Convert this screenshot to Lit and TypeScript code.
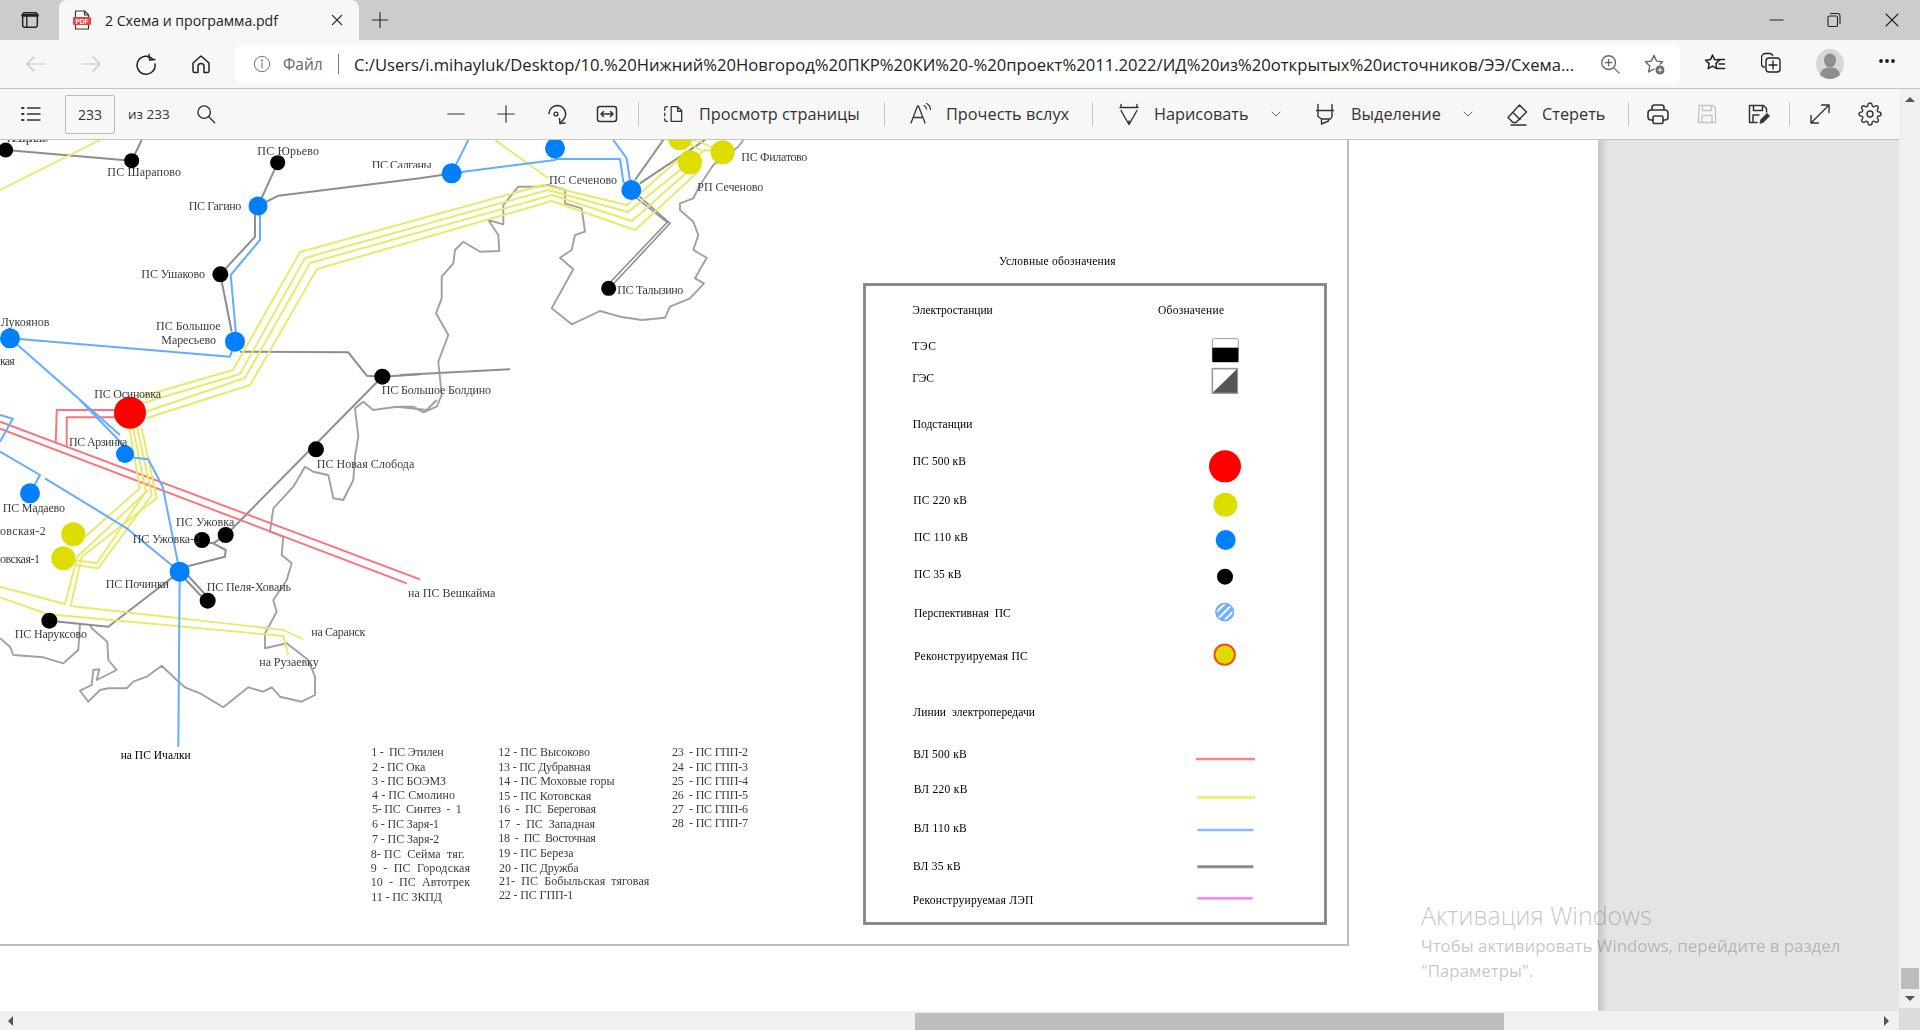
import { LitElement, html, css, svg } from "lit";
import { customElement } from "lit/decorators.js";

type Frame = [number, number];
const Z4: Frame = [0, 135], Z5: Frame = [400, 135], Z6: Frame = [0, 400], Z7: Frame = [350, 730], Z8: Frame = [850, 240], Z9: Frame = [850, 540], Z10: Frame = [0, 600], A: Frame = [0, 0];

const pts = (f: Frame, s: string) =>
  s.trim().split(/\s+/).map((p) => {
    const [x, y] = p.split(",").map(Number);
    return f === A ? `${x},${y}` : `${(f[0] + x / 3).toFixed(1)},${(f[1] + y / 3).toFixed(1)}`;
  }).join(" ");

const C = { y: "#e9e966", r: "#ff7078", b: "#62adff", g: "#8e8e8e", bd: "#a0a0a0" };

// [frame, colour, width, points] in crop coordinates of the reference
const LINES: [Frame, string, number, string][] = [
  // region border
  [Z5, C.bd, 1.9, "1030,15 1015,35 940,90 900,150 880,190 840,205 840,225 880,260 895,300 880,345 920,368 885,430 912,445 870,490 810,515 795,548 725,555 660,545 600,528 515,568 455,520 520,403 480,368 515,345 525,300 555,290 545,220 495,205 495,165 445,150 410,155 355,155 310,210 310,268 265,255 295,300 298,348 240,350 190,320 165,345 160,385 125,425 125,490 108,535 145,600 115,680 125,780 110,815 70,832 40,815 0,815"],
  [Z6, C.bd, 1.9, "1310,0 1280,30 1190,20 1120,30 1090,5 1065,25 1075,110 1065,170 1060,240 1030,300 1000,295 985,225 940,215 915,200 880,260 820,325 810,395 850,410 845,465 875,490 860,540 820,600 830,635 795,700 795,745 860,730 925,780"],
  [Z10, C.bd, 1.9, "925,180 945,230 945,285 905,305 840,290 815,262 790,275 745,262 670,322 600,280 555,262 530,240 485,197 440,230 400,245 380,265 325,265 300,270 265,305 240,272 275,255 280,210 298,208 290,240 350,210 325,180 322,125 275,85 270,75"],
  [Z10, C.bd, 1.9, "240,70 235,150 190,190 130,172 40,165 30,140 0,115"],
  // 35 kV
  [Z4, C.g, 2, "17,45 395,77 425,15"],
  [Z4, C.g, 2, "833,83 774,213 835,182 1260,130 1360,115"],
  [Z4, C.g, 2, "765,213 765,305 661,418 695,590"],
  [Z4, C.g, 2, "720,650 1045,652 1100,722 1147,725 1260,718"],
  [Z5, C.g, 2, "0,720 330,703"],
  [Z5, C.g, 2, "705,135 790,15"],
  [Z5, C.g, 2, "720,145 915,15"],
  [Z5, C.g, 1.6, "708,188 802,262 632,440"],
  [Z5, C.g, 1.6, "718,184 810,265 642,445"],
  [A, C.g, 2, "382,377 226,535"],
  [Z6, C.g, 2, "606,425 640,430 677,405"],
  [Z6, C.g, 2, "640,430 677,450 675,470 539,505"],
  [Z6, C.g, 2, "553,535 610,595"],
  [Z6, C.g, 2, "565,528 622,590"],
  [Z6, C.g, 2, "539,515 325,680 148,662"],
  // 500 kV
  [Z6, C.r, 1.9, "0,65 1260,538"],
  [Z6, C.r, 1.9, "0,86 1220,550"],
  [Z6, C.r, 1.9, "345,30 170,30 167,128"],
  [Z6, C.r, 1.9, "345,52 200,52 200,142"],
  // 220 kV
  [Z4, C.y, 1.9, "0,165 300,15"],
  [A, C.y, 1.9, "140,397 233,370 300,252 543,185 627,205 680,158"],
  [A, C.y, 1.9, "143,403 240,374 305,258 548,190 628,212 690,162"],
  [A, C.y, 1.9, "145,412 245,378 310,263 552,195 632,221 695,165"],
  [A, C.y, 1.9, "147,418 250,385 317,269 552,201 635,230 700,170"],
  [Z5, C.y, 1.9, "285,15 445,130"],
  [A, C.y, 1.7, "680,138 700,142 723,152"],
  [A, C.y, 1.7, "690,162 705,150 723,152"],
  [A, C.y, 1.7, "680,138 700,150 723,152"],
  [Z6, C.y, 1.9, "388,85 420,265 255,410"],
  [Z6, C.y, 1.9, "400,85 437,275 290,490 225,480"],
  [Z6, C.y, 1.9, "412,85 455,285 295,505 225,495"],
  [Z6, C.y, 1.9, "425,85 470,295 245,470 212,618 850,690 910,718"],
  [Z6, C.y, 1.9, "445,270 232,470 195,612 0,560"],
  [Z6, C.y, 1.9, "0,592 140,642 850,708 865,765"],
  // 110 kV
  [Z4, C.b, 2, "780,213 780,315 692,420 710,620"],
  [Z4, C.b, 2, "30,610 690,665 705,620"],
  [Z4, C.b, 2, "30,610 360,900"],
  [Z6, C.b, 2, "240,0 375,140"],
  [Z6, C.b, 2, "375,170 445,178 488,260 539,515 535,1040"],
  [Z6, C.b, 2, "0,155 120,225 90,280"],
  [Z6, C.b, 2, "135,235 380,385 539,515"],
  [Z6, C.b, 2, "0,45 38,56 0,125"],
  [Z5, C.b, 2, "155,115 205,15"],
  [Z5, C.b, 2, "155,115 465,75 465,40"],
  [Z5, C.b, 2, "465,72 660,72 670,140 690,165"],
  [Z5, C.b, 2, "640,15 680,70 694,165"],
];

const NODES: [Frame, number, number, number, string][] = [
  [Z4, 17, 45, 7.5, "#000"], [Z4, 395, 77, 7.5, "#000"], [Z4, 833, 83, 7.5, "#000"],
  [Z4, 774, 213, 9.5, "#0080ff"], [Z4, 661, 418, 8, "#000"], [Z4, 705, 620, 10, "#0080ff"],
  [Z4, 30, 610, 10, "#0080ff"], [Z4, 390, 833, 16, "#ff0000"], [Z4, 1147, 725, 8, "#000"],
  [Z5, 155, 115, 10, "#0080ff"], [Z5, 465, 40, 10, "#0080ff"], [Z5, 694, 165, 10, "#0080ff"],
  [Z5, 840, 10, 12, "#dddd00"], [Z5, 870, 82, 12, "#dddd00"], [Z5, 968, 52, 12, "#dddd00"],
  [Z5, 626, 460, 7.5, "#000"], [Z6, 375, 162, 9, "#0080ff"], [Z6, 90, 280, 10, "#0080ff"],
  [Z6, 220, 403, 12, "#dddd00"], [Z6, 190, 475, 12, "#dddd00"], [Z6, 677, 405, 8, "#000"],
  [Z6, 606, 420, 8, "#000"], [Z6, 539, 515, 10, "#0080ff"], [Z6, 623, 602, 8, "#000"],
  [Z6, 148, 662, 8, "#000"], [Z6, 948, 148, 8, "#000"],
];

// [frame, text, x, baseline, end x]
const LABELS: [Frame, string, number, number, number][] = [
  [Z4, "ПС Борисово", 20, 20, 145], [Z4, "ПС Шарапово", 322, 122, 543], [Z4, "ПС Юрьево", 772, 60, 957],
  [Z4, "ПС Гагино", 566, 225, 724], [Z4, "ПС Ушаково", 424, 430, 615], [Z4, "ПС Большое", 468, 585, 662],
  [Z4, "Маресьево", 484, 628, 648], [Z4, "ПС Осиновка", 283, 790, 483], [Z4, "Лукоянов", 2, 573, 148],
  [Z4, "кая", 0, 690, 44], [Z4, "ПС Салганы", 1115, 102, 1295], [Z4, "ПС Большое Болдино", 1145, 777, 1473],
  [Z5, "ПС Сеченово", 447, 147, 651], [Z5, "ПС Филатово", 1024, 78, 1222], [Z5, "РП Сеченово", 892, 168, 1090],
  [Z5, "ПС Талызино", 652, 477, 850],
  [Z6, "ПС Арзинка", 207, 137, 382], [Z6, "ПС Новая Слобода", 950, 204, 1243], [Z6, "ПС Мадаево", 8, 336, 195],
  [Z6, "овская-2", 0, 405, 137], [Z6, "овская-1", 0, 490, 120], [Z6, "ПС Ужовка", 528, 378, 703],
  [Z6, "ПС Ужовка-2", 398, 428, 600], [Z6, "ПС Починки", 317, 563, 507], [Z6, "ПС Пеля-Ховань", 620, 573, 873],
  [Z6, "на ПС Вешкайма", 1224, 590, 1486], [Z6, "на Саранск", 934, 708, 1096], [Z6, "на Рузаевку", 778, 798, 956],
  [Z6, "ПС Наруксово", 44, 714, 261],
  [Z7, "1 -  ПС Этилен", 64, 78, 281], [Z7, "2 - ПС Ока", 66, 122, 226], [Z7, "3 - ПС БОЭМЗ", 66, 164, 288],
  [Z7, "4 - ПС Смолино", 66, 207, 315], [Z7, "5- ПС  Синтез  -  1", 66, 249, 335], [Z7, "6 - ПС Заря-1", 66, 294, 267],
  [Z7, "7 - ПС Заря-2", 66, 338, 268], [Z7, "8- ПС  Сейма  тяг.", 62, 384, 344], [Z7, "9  -  ПС  Городская", 62, 426, 360],
  [Z7, "10  -  ПС  Автотрек", 62, 468, 360], [Z7, "11 - ПС ЗКПД", 64, 512, 276],
  [Z7, "12 - ПС Высоково", 445, 78, 720], [Z7, "13 - ПС Дубравная", 445, 123, 722], [Z7, "14 - ПС Моховые горы", 445, 165, 794],
  [Z7, "15 - ПС Котовская", 445, 210, 724], [Z7, "16  -  ПС  Береговая", 445, 249, 738], [Z7, "17  -  ПС  Западная", 445, 294, 735],
  [Z7, "18  -  ПС  Восточная", 445, 336, 737], [Z7, "19 - ПС Береза", 445, 381, 671], [Z7, "20 - ПС Дружба", 447, 426, 686],
  [Z7, "21-  ПС  Бобыльская  тяговая", 447, 466, 898], [Z7, "22 - ПС ГПП-1", 447, 506, 670],
  [Z7, "23  - ПС ГПП-2", 966, 78, 1194], [Z7, "24  - ПС ГПП-3", 966, 122, 1194], [Z7, "25  - ПС ГПП-4", 966, 164, 1194],
  [Z7, "26  - ПС ГПП-5", 966, 207, 1194], [Z7, "27  - ПС ГПП-6", 966, 249, 1194], [Z7, "28  - ПС ГПП-7", 966, 291, 1194],
];

const LEGEND: [Frame, string, number, number, number][] = [
  [Z6, "на ПС Ичалки", 362, 1078, 572],
  [Z8, "Условные обозначения", 447, 75, 797], [Z8, "Электростанции", 187, 222, 428], [Z8, "Обозначение", 924, 222, 1122],
  [Z8, "ТЭС", 187, 330, 258], [Z8, "ГЭС", 187, 426, 252], [Z8, "Подстанции", 188, 564, 367], [Z8, "ПС 500 кВ", 188, 675, 348],
  [Z8, "ПС 220 кВ", 190, 791, 351], [Z8, "ПС 110 кВ", 192, 903, 354], [Z9, "ПС 35 кВ", 192, 113, 334],
  [Z9, "Перспективная  ПС", 192, 230, 482], [Z9, "Реконструируемая ПС", 192, 360, 533], [Z9, "Линии  электропередачи", 190, 528, 555],
  [Z9, "ВЛ 500 кВ", 190, 654, 350], [Z9, "ВЛ 220 кВ", 191, 758, 352], [Z9, "ВЛ 110 кВ", 191, 875, 350],
  [Z9, "ВЛ 35 кВ", 189, 989, 332], [Z9, "Реконструируемая ЛЭП", 188, 1091, 550],
];

const LEGEND_LINES: [number, number, number, string, number][] = [
  [1038, 1215, 657, "#ff8088", 2.6], [1042, 1215, 772, "#eeee70", 2.6], [1042, 1210, 870, "#88bbff", 2.6],
  [1042, 1210, 980, "#8c8c8c", 3], [1042, 1208, 1075, "#ff70ff", 2.4],
];

const label = (cls: string) => (l: [Frame, string, number, number, number]) => {
  const [f, t, x, y, e] = l;
  return svg`<text class=${cls} x=${f[0] + x / 3} y=${f[1] + y / 3} textLength=${(e - x) / 3} lengthAdjust="spacing">${t}</text>`;
};

const ic = (body: unknown, size = 24, view = 24) =>
  html`<svg class="i" width=${size} height=${size} viewBox="0 0 ${view} ${view}" fill="none" stroke="currentColor" stroke-width="1.4" stroke-linecap="round" stroke-linejoin="round">${body}</svg>`;

const GEAR = "M19.4 15a1.65 1.65 0 0 0 .33 1.82l.06.06a2 2 0 0 1 0 2.83 2 2 0 0 1-2.83 0l-.06-.06a1.65 1.65 0 0 0-1.82-.33 1.65 1.65 0 0 0-1 1.51V21a2 2 0 0 1-2 2 2 2 0 0 1-2-2v-.09A1.65 1.65 0 0 0 9 19.4a1.65 1.65 0 0 0-1.82.33l-.06.06a2 2 0 0 1-2.83 0 2 2 0 0 1 0-2.83l.06-.06a1.65 1.65 0 0 0 .33-1.82 1.65 1.65 0 0 0-1.51-1H3a2 2 0 0 1-2-2 2 2 0 0 1 2-2h.09A1.65 1.65 0 0 0 4.6 9a1.65 1.65 0 0 0-.33-1.82l-.06-.06a2 2 0 0 1 0-2.83 2 2 0 0 1 2.83 0l.06.06a1.65 1.65 0 0 0 1.82.33H9a1.65 1.65 0 0 0 1-1.51V3a2 2 0 0 1 2-2 2 2 0 0 1 2 2v.09a1.65 1.65 0 0 0 1 1.51 1.65 1.65 0 0 0 1.82-.33l.06-.06a2 2 0 0 1 2.83 0 2 2 0 0 1 0 2.83l-.06.06a1.65 1.65 0 0 0-.33 1.82V9a1.65 1.65 0 0 0 1.51 1H21a2 2 0 0 1 2 2 2 2 0 0 1-2 2h-.09a1.65 1.65 0 0 0-1.51 1z";

const STAR = "M12 3.5l2.6 5.6 6 .7-4.4 4.1 1.2 6L12 17l-5.4 2.9 1.2-6-4.4-4.1 6-.7z";

@customElement("app-root")
export class AppRoot extends LitElement {
  static styles = css`
    :host { display: block; position: relative; width: 1920px; height: 1030px; overflow: hidden; font-family: "Open Sans", "Noto Sans", sans-serif; color: #222; background: #fff; }
    .i { display: block; flex: none; }
    .tabstrip { display: flex; height: 40px; background: #ccc; align-items: stretch; }
    .tabs-btn { width: 59px; display: flex; align-items: center; justify-content: center; }
    .tab { width: 300px; background: #f7f7f7; border-radius: 8px 8px 0 0; display: flex; align-items: center; padding: 0 12px 0 14px; box-sizing: border-box; font-size: 14.1px; white-space: nowrap; }
    .tab .name { margin-left: 14px; flex: 1; }
    .newtab { width: 42px; display: flex; align-items: center; justify-content: center; }
    .win { margin-left: auto; display: flex; }
    .win div { width: 57px; display: flex; align-items: center; justify-content: center; }
    .toolbar { display: flex; align-items: center; height: 48px; background: #f7f7f7; border-bottom: 1px solid #c4c4c4; padding-left: 8px; }
    .nav { width: 55px; display: flex; justify-content: center; }
    .dis { color: #c6c6c6; }
    .pill { width: 1445px; height: 38px; margin-left: 7px; background: #fff; border-radius: 6px; display: flex; align-items: center; padding-left: 17px; box-sizing: border-box; font-size: 16.64px; white-space: nowrap; }
    .info { color: #666; }
    .file { margin-left: 11px; width: 40px; color: #666; font-size: 15.5px; }
    .bar { width: 1px; height: 20px; background: #777; margin-left: 15px; }
    .url { width: 1222px; margin-left: 15px; overflow: hidden; }
    .pill-btn { width: 44px; display: flex; justify-content: center; color: #666; }
    .pill-btn.first { margin-left: 12px; }
    .side { display: flex; margin-left: 7px; }
    .side div { width: 57px; display: flex; justify-content: center; }
    .body { display: flex; height: 941px; }
    .main { width: 1899px; display: flex; flex-direction: column; }
    .pdfbar { height: 50px; background: #f7f7f7; border-bottom: 1px solid #c4c4c4; display: flex; align-items: center; font-size: 16.3px; white-space: nowrap; color: #333; }
    .btn { width: 40px; display: flex; justify-content: center; flex: none; }
    .btn.w50 { width: 50px; }
    .pageno { width: 50px; height: 39px; box-sizing: border-box; border: 1px solid #bbb; border-radius: 2px; background: #f7f7f7; display: flex; align-items: center; justify-content: center; font-size: 14px; }
    .of { width: 43px; font-size: 13.5px; }
    .sep { width: 1px; height: 24px; background: #c6c6c6; flex: none; }
    .ico { width: 20px; display: flex; justify-content: center; flex: none; }
    .txt { flex: none; }
    .chev { width: 16px; display: flex; justify-content: center; flex: none; color: #666; }
    .ml9 { margin-left: 9px; } .ml10 { margin-left: 10px; } .ml11 { margin-left: 11px; } .ml13 { margin-left: 13px; } .ml14 { margin-left: 14px; } .ml15 { margin-left: 15px; } .ml16 { margin-left: 16px; }
    .ml21 { margin-left: 21px; } .ml22 { margin-left: 22px; } .ml23 { margin-left: 23px; } .ml24 { margin-left: 24px; } .ml26 { margin-left: 26px; } .ml31 { margin-left: 31px; } .ml205 { margin-left: 205px; } .ml6 { margin-left: 6px; } .ml1 { margin-left: 1px; }
    .w162 { width: 162px; } .w123 { width: 123px; } .w93 { width: 93px; } .w87 { width: 87px; } .w62 { width: 62px; }
    .viewer { height: 871px; display: flex; background: #e4e4e4; }
    .page { width: 1598px; height: 871px; background: #fff; flex: none; }
    .page svg { display: block; filter: blur(.5px); }
    .page text { font-family: "Liberation Serif", serif; font-size: 12px; fill: #3c3c3c; white-space: pre; }
    .page text.lg { font-size: 11.5px; fill: #000; }
    .gutter { flex: 1; background: linear-gradient(90deg, #c6c6c6 0, #e4e4e4 10px); }
    .hscroll { height: 19px; background: #f0f0f0; display: flex; align-items: center; }
    .hthumb { width: 589px; height: 17px; margin-top: 2px; background: #bdbdbd; margin-left: 902px; }
    .arrow-l, .arrow-r { width: 0; height: 0; border-top: 5px solid transparent; border-bottom: 5px solid transparent; }
    .arrow-l { border-right: 5px solid #555; margin-left: 8px; }
    .arrow-r { border-left: 5px solid #555; margin-left: 380px; }
    .vscroll { width: 21px; background: #f0f0f0; display: flex; flex-direction: column; align-items: center; }
    .arrow-u, .arrow-d { width: 0; height: 0; border-left: 5px solid transparent; border-right: 5px solid transparent; flex: none; }
    .arrow-u { border-bottom: 5px solid #555; margin-top: 8px; }
    .vthumb { width: 18px; height: 21px; background: #bdbdbd; margin-top: 866px; flex: none; }
    .arrow-d { border-top: 5px solid #555; margin-top: 7px; }
    .corner { flex: 1; width: 21px; margin-top: 7px; background: #dcdcdc; }
    .watermark { position: absolute; left: 1421px; top: 897px; color: rgba(90, 90, 90, .36); font-family: "Open Sans", "Noto Sans", sans-serif; pointer-events: none; white-space: nowrap; }
    .wm1 { font-size: 24.9px; font-weight: 300; line-height: 36px; }
    .wm2 { font-size: 16.85px; font-weight: 400; line-height: 25px; }
  `;

  private page() {
    const s8 = (x: number) => 850 + x / 3;
    const y8 = (y: number) => 240 + y / 3;
    const y9 = (y: number) => 540 + y / 3;
    return svg`
      <defs>
        <clipPath id="hc"><circle cx=${s8(1124)} cy=${y9(216)} r="9.3"></circle></clipPath>
      </defs>
      ${LINES.map(([f, c, w, p]) => svg`<polyline points=${pts(f, p)} fill="none" stroke=${c} stroke-width=${w} stroke-linejoin="round"></polyline>`)}
      ${NODES.map(([f, x, y, r, c]) => svg`<circle cx=${f[0] + x / 3} cy=${f[1] + y / 3} r=${r} fill=${c}></circle>`)}
      ${LABELS.map(label(""))}
      ${LEGEND.map(label("lg"))}
      <rect x="370" y="168" width="64" height="5" fill="#fff"></rect>
      <rect x="864.5" y="284.5" width="461" height="639" fill="none" stroke="#858585" stroke-width="2.8"></rect>
      <rect x=${s8(1087)} y=${y8(296)} width="26" height="23" rx="2" fill="#fff" stroke="#999" stroke-width="1"></rect>
      <rect x=${s8(1087)} y=${y8(323)} width="26" height="14.5" fill="#000"></rect>
      <rect x=${s8(1087)} y=${y8(386)} width="25" height="24.5" fill="#fff" stroke="#999" stroke-width="1.6"></rect>
      <polygon points="${s8(1088)},${y8(458)} ${s8(1161)},${y8(387)} ${s8(1161)},${y8(458)}" fill="#555"></polygon>
      <circle cx=${s8(1125)} cy=${y8(679)} r="16" fill="#ff0000"></circle>
      <circle cx=${s8(1126)} cy=${y8(794)} r="12" fill="#dddd00"></circle>
      <circle cx=${s8(1127)} cy=${y9(0)} r="10" fill="#0080ff"></circle>
      <circle cx=${s8(1125)} cy=${y9(110)} r="8" fill="#000"></circle>
      <circle cx=${s8(1124)} cy=${y9(216)} r="9.3" fill="#6ab0ff"></circle>
      <g clip-path="url(#hc)" stroke="#fff" stroke-width="2">
        <line x1=${s8(1124) - 12} y1=${y9(216) + 4} x2=${s8(1124) + 4} y2=${y9(216) - 12}></line>
        <line x1=${s8(1124) - 8} y1=${y9(216) + 8} x2=${s8(1124) + 8} y2=${y9(216) - 8}></line>
        <line x1=${s8(1124) - 4} y1=${y9(216) + 12} x2=${s8(1124) + 12} y2=${y9(216) - 4}></line>
      </g>
      <circle cx=${s8(1124)} cy=${y9(216)} r="8.6" fill="none" stroke="#6ab0ff" stroke-width="1.5"></circle>
      <circle cx=${s8(1124)} cy=${y9(344)} r="10.2" fill="#dddd00" stroke="#ff4a10" stroke-width="2"></circle>
      ${LEGEND_LINES.map(([a, b, y, c, w]) => svg`<line x1=${s8(a)} x2=${s8(b)} y1=${y9(y)} y2=${y9(y)} stroke=${c} stroke-width=${w}></line>`)}
      <polyline points="1348,140 1348,945 0,945" fill="none" stroke="#bcbcbc" stroke-width="2"></polyline>
    `;
  }

  render() {
    return html`
      <div class="tabstrip">
        <div class="tabs-btn">${ic(svg`<rect x="4" y="4" width="16" height="16" rx="2.5" stroke-width="1.6"></rect><path d="M4 7h16" stroke-width="3"></path><path d="M8.5 8v12" stroke-width="1.5"></path>`, 22)}</div>
        <div class="tab">
          <svg class="i" width="18" height="20" viewBox="0 0 18 20" fill="none">
            <path d="M2.5 1h9l4 4v14h-13z" fill="#fff" stroke="#333" stroke-width="1.2" stroke-linejoin="round"></path>
            <path d="M11.5 1v4h4" stroke="#333" stroke-width="1.2"></path>
            <rect x="0" y="7" width="18" height="8" rx="1" fill="#ec3f3f"></rect>
            <text x="9" y="13.5" text-anchor="middle" font-family="Liberation Sans, sans-serif" font-size="6.5" font-weight="700" fill="#fff">PDF</text>
          </svg>
          <span class="name">2 Схема и программа.pdf</span>
          ${ic(svg`<path d="M6.5 6.5l11 11M17.5 6.5l-11 11" stroke-width="1.5"></path>`, 20)}
        </div>
        <div class="newtab">${ic(svg`<path d="M12 3v18M3 12h18" stroke-width="1.3"></path>`, 20)}</div>
        <div class="win">
          <div>${ic(svg`<path d="M4 12h13" stroke-width="1.1"></path>`, 24)}</div>
          <div>${ic(svg`<rect x="5" y="8" width="9.5" height="10.5" rx="1.5" stroke-width="1.1"></rect><path d="M7.500 5.500h7a2.500 2.500 0 0 1 2.500 2.500v7.500" stroke-width="1.1"></path>`, 24)}</div>
          <div>${ic(svg`<path d="M6 6l12 12M18 6L6 18" stroke-width="1.1"></path>`, 24)}</div>
        </div>
      </div>
      <div class="toolbar">
        <div class="nav dis">${ic(svg`<path d="M21 12H3M10 5l-7 7 7 7" stroke-width="1.2"></path>`)}</div>
        <div class="nav dis">${ic(svg`<path d="M3 12h18M14 5l7 7-7 7" stroke-width="1.2"></path>`)}</div>
        <div class="nav">${ic(svg`<path d="M19 7.5A9 9 0 1 0 21 12" stroke-width="1.5"></path><path d="M15 2.5l.5 5.5 5.5-.5" stroke-width="1.5"></path>`)}</div>
        <div class="nav">${ic(svg`<path d="M4 11l8-7 8 7v8a1.5 1.5 0 0 1-1.5 1.5H15v-6a3 3 0 0 0-6 0v6H5.5A1.5 1.5 0 0 1 4 19z" stroke-width="1.5"></path>`)}</div>
        <div class="pill">
          <span class="info">${ic(svg`<circle cx="12" cy="12" r="9.2" stroke-width="1.1"></circle><path d="M12 10.5v6" stroke-width="1.2"></path><circle cx="12" cy="7.7" r=".5"></circle>`, 20)}</span>
          <span class="file">Файл</span>
          <span class="bar"></span>
          <span class="url">C:/Users/i.mihayluk/Desktop/10.%20Нижний%20Новгород%20ПКР%20КИ%20-%20проект%2011.2022/ИД%20из%20открытых%20источников/ЭЭ/Схема...</span>
          <div class="pill-btn first">${ic(svg`<circle cx="10.5" cy="10.5" r="7.5"></circle><path d="M16 16l6 6M10.5 7v7M7 10.5h7"></path>`, 22)}</div>
          <div class="pill-btn">${ic(svg`<path d="${STAR}"></path><circle cx="18" cy="18" r="5" fill="#666" stroke="#fff" stroke-width="1"></circle><path d="M18 15.8v4.4M15.8 18h4.4" stroke="#fff" stroke-width="1"></path>`, 24)}</div>
        </div>
        <div class="side">
          <div>${ic(svg`<g transform="translate(-1 2)"><path d="M9.5 4l2 4.6 5 .6-3.7 3.4 1 5-4.3-2.5-4.3 2.5 1-5L2.5 9.2l5-.6z" stroke-width="1.5"></path><path d="M15 8.5h6.5M16 13h5.5M14.5 17.5h7" stroke-width="1.4"></path></g>`)}</div>
          <div>${ic(svg`<g transform="translate(-2.500 1.500)"><path d="M6 16.5A3 3 0 0 1 3 14V7a4 4 0 0 1 4-4h4.500a3 3 0 0 1 2.700 2" stroke-width="1.4"></path><rect x="7.500" y="7.500" width="14" height="14" rx="3" stroke-width="1.4"></rect><path d="M14.500 10.500v8M10.500 14.500h8" stroke-width="1.4"></path></g>`)}</div>
          <div>
            <svg class="i" width="28" height="30" viewBox="0 0 28 30"><ellipse cx="14" cy="15" rx="14" ry="15" fill="#d6d6d6"></ellipse><ellipse cx="14" cy="11.500" rx="6" ry="7" fill="#8e8e8e"></ellipse><path d="M4 26c1-6 5-7.500 10-7.500S23 20 24 26c-3 2.600-6.500 4-10 4s-7-1.400-10-4z" fill="#8e8e8e"></path></svg>
          </div>
          <div>${ic(svg`<circle cx="6" cy="12" r="1.200" fill="currentColor"></circle><circle cx="12" cy="12" r="1.200" fill="currentColor"></circle><circle cx="18" cy="12" r="1.200" fill="currentColor"></circle>`)}</div>
        </div>
      </div>
      <div class="body">
        <div class="main">
          <div class="pdfbar">
            <div class="btn ml11">${ic(svg`<path d="M8.500 6H21M8.500 12H21M8.500 18H21" stroke-width="1.4"></path><path d="M3 6h1.500M3 12h1.500M3 18h1.500" stroke-width="2"></path>`, 24)}</div>
            <div class="pageno ml14">233</div>
            <div class="of ml13">из 233</div>
            <div class="btn ml15">${ic(svg`<circle cx="10" cy="10" r="6.800" stroke-width="1.500"></circle><path d="M15 15l6.500 6.500" stroke-width="1.500"></path>`, 22)}</div>
            <div class="btn w50 ml205">${ic(svg`<path d="M3 12h18" stroke-width="1.300"></path>`, 22)}</div>
            <div class="btn w50">${ic(svg`<path d="M3 12h18M12 3v18" stroke-width="1.300"></path>`, 22)}</div>
            <div class="btn w50">${ic(svg`<path d="M5 11.500A8.500 8.500 0 0 1 13 3.500a8.500 8.500 0 0 1 6.500 14L16 21.500" stroke-width="1.500"></path><path d="M15.500 16.500l.5 5 5-.5" stroke-width="1.500"></path><circle cx="12" cy="12" r="1.900" stroke-width="1.400"></circle>`, 24)}</div>
            <div class="btn w50 ml1">${ic(svg`<rect x="2.500" y="4.500" width="19" height="15" rx="2.500" stroke-width="1.500"></rect><path d="M6 12h12M8.500 9.500L6 12l2.500 2.500M15.500 9.500L18 12l-2.500 2.500" stroke-width="1.500"></path>`, 24)}</div>
            <div class="sep ml6"></div>
            <div class="ico ml24">${ic(svg`<path d="M10 4h7l4.500 4.500V20H10zM17 4v5h4.500" stroke-width="1.400"></path><path d="M6 4H4.500A1.500 1.500 0 0 0 3 5.500V8M3 11v3M3 17v1.500A1.500 1.500 0 0 0 4.500 20H6" stroke-width="1.400"></path>`, 22)}</div>
            <div class="txt w162 ml16">Просмотр страницы</div>
            <div class="sep ml23"></div>
            <div class="ico ml26">${ic(svg`<path d="M2 21L8.500 4h1L16 21M4.500 15.500h9.500" stroke-width="1.300"></path><path d="M15 3.500a4 4 0 0 1 2.500 3.500M17.500 1.500a7 7 0 0 1 4 6" stroke-width="1.200"></path>`, 24)}</div>
            <div class="txt w123 ml15">Прочесть вслух</div>
            <div class="sep ml23"></div>
            <div class="ico ml26">${ic(svg`<path d="M3 5.500h18M4 8.500l8 14 8-14M4 2.500v3M20 2.500v3M12 19v3" stroke-width="1.400"></path>`, 24)}</div>
            <div class="txt w93 ml15">Нарисовать</div>
            <div class="chev ml21">${ic(svg`<path d="M4 6l4 4 4-4" stroke-width="1"></path>`, 16, 16)}</div>
            <div class="ico ml31">${ic(svg`<path d="M5 2.500v6h14v-6M3.500 8.500h17M5 8.500v6l3.500 2.500h9l1.500-2.500v-6M8.500 17v5l7-3v-2" stroke-width="1.400"></path>`, 24)}</div>
            <div class="txt w87 ml16">Выделение</div>
            <div class="chev ml22">${ic(svg`<path d="M4 6l4 4 4-4" stroke-width="1"></path>`, 16, 16)}</div>
            <div class="ico ml31">${ic(svg`<path d="M14.500 3l7 7-10.500 10.500h-3L3 15.500zM8 10.500l7 7M6 23h15" stroke-width="1.400"></path>`, 24)}</div>
            <div class="txt w62 ml15">Стереть</div>
            <div class="sep ml24"></div>
            <div class="btn ml9">${ic(svg`<path d="M6 8V5.500A2.500 2.500 0 0 1 8.500 3h7A2.500 2.500 0 0 1 18 5.500V8M7 18H5a3 3 0 0 1-3-3v-4a3 3 0 0 1 3-3h14a3 3 0 0 1 3 3v4a3 3 0 0 1-3 3h-2" stroke-width="1.600"></path><rect x="7" y="14" width="10" height="7.500" rx="1.500" stroke-width="1.600"></rect>`, 24)}</div>
            <div class="btn ml9 dis">${ic(svg`<path d="M4 3.500h14l2.500 2.500v14.500h-17zM7.500 3.500v5h9v-5M7 20.500v-7h10v7" stroke-width="1.400"></path>`, 24)}</div>
            <div class="btn ml11">${ic(svg`<path d="M11 20.500H3.500v-17h14l3 3V10M7.500 3.500v5h9v-5M7 20v-7h6" stroke-width="1.500"></path><path d="M14 21l1-3.500 6-6 2.500 2.500-6 6z" fill="currentColor" stroke-width="1"></path>`, 24)}</div>
            <div class="sep ml11"></div>
            <div class="btn ml10">${ic(svg`<path d="M3 21L21 3M13.500 3H21v7.500M3 13.500V21h7.500" stroke-width="1.400"></path>`, 24)}</div>
            <div class="btn ml10">${ic(svg`<circle cx="12" cy="12" r="3" stroke-width="1.400"></circle><path d="${GEAR}" stroke-width="1.400"></path>`, 24)}</div>
          </div>
          <div class="viewer">
            <div class="page">
              <svg width="1598" height="871" viewBox="0 140 1598 871">${this.page()}</svg>
            </div>
            <div class="gutter"></div>
          </div>
          <div class="hscroll">
            <div class="arrow-l"></div>
            <div class="hthumb"></div>
            <div class="arrow-r"></div>
          </div>
        </div>
        <div class="vscroll">
          <div class="arrow-u"></div>
          <div class="vthumb"></div>
          <div class="arrow-d"></div>
          <div class="corner"></div>
        </div>
      </div>
      <div class="watermark">
        <div class="wm1">Активация Windows</div>
        <div class="wm2">Чтобы активировать Windows, перейдите в раздел</div>
        <div class="wm2">"Параметры".</div>
      </div>
    `;
  }
}
